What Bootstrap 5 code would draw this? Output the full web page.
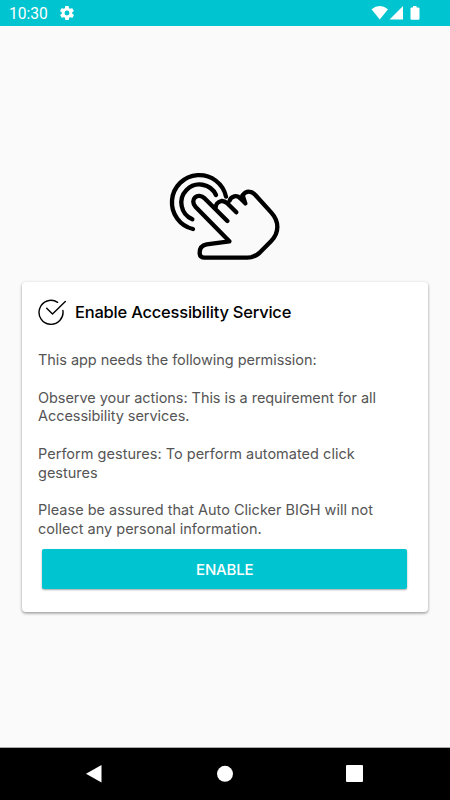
<!DOCTYPE html>
<html lang="en">
<head>
<meta charset="utf-8">
<meta name="viewport" content="width=device-width, initial-scale=1">
<title>Enable Accessibility Service</title>
<link href="https://cdn.jsdelivr.net/npm/bootstrap@5.3.0/dist/css/bootstrap.min.css" rel="stylesheet">
<style>
body{background:#fafafa;font-family:"Inter","Liberation Sans",sans-serif;height:800px;overflow:hidden}
svg{display:block;flex:none}
.status{height:26px;background:#00c5d0;padding:0 29px 0 9px;color:#fff}
.clock{font:15.6px/26px Roboto,sans-serif;width:51px;padding-top:1px}
.hero{margin:139px 0 0 160px}
.panel{margin:12px 22px 0;height:330px;border:0;border-radius:4px;box-shadow:0 1px 3px rgba(0,0,0,.32),0 2px 3px rgba(0,0,0,.12);padding:16px 16px 0}
.panel h1{font-size:16.5px;line-height:28px;font-weight:500;color:#000;letter-spacing:-.22px;margin-left:9px}
.copy{font-size:14.5px;line-height:18.75px;color:#555;margin-top:25px;white-space:nowrap}
.copy p{margin-bottom:18.75px}
.copy p:last-child{margin-bottom:0}
.l1,.l2,.l3{letter-spacing:-.05px}
.l4{letter-spacing:.02px}
.enable{margin:10.5px 5px 0 4.400px;height:40.400px;background:#00c5d0;color:#fff;border:0;border-radius:2px;font-size:15px;font-weight:500;letter-spacing:-.2px;padding:2px 0 0;box-shadow:0 1px 2px rgba(0,0,0,.35)}
.softkeys{height:52px;background:#000;box-shadow:0 -1px 0 #aaa}
</style>
<script src="https://cdn.jsdelivr.net/npm/bootstrap@5.3.0/dist/js/bootstrap.bundle.min.js"></script>
</head>
<body class="d-flex flex-column">
<header class="status d-flex align-items-center flex-shrink-0">
  <span class="clock">10:30</span>
  <svg width="14" height="14" viewBox="2 2 20 20" fill="#fff" aria-hidden="true"><path d="M19.4 13c.1-.3.1-.7.1-1s0-.7-.1-1l2.1-1.600c.2-.2.300-.4.100-.7l-2-3.400c-.1-.2-.4-.3-.6-.2l-2.500 1c-.5-.4-1.100-.7-1.700-1l-.4-2.600c0-.3-.2-.5-.5-.5h-4c-.2 0-.4.200-.5.500l-.4 2.600c-.6.300-1.200.600-1.700 1l-2.500-1c-.2-.1-.5 0-.6.200l-2 3.400c-.1.200-.1.500.1.700L4.600 11c0 .3-.1.700-.1 1s0 .7.100 1l-2.100 1.600c-.2.200-.3.400-.1.700l2 3.400c.1.200.4.300.6.200l2.500-1c.5.400 1.100.7 1.700 1l.4 2.600c0 .3.200.5.500.5h4c.2 0 .4-.2.500-.5l.4-2.600c.6-.3 1.200-.6 1.700-1l2.500 1c.2.100.5 0 .6-.2l2-3.400c.1-.2.100-.5-.1-.7zM12 15.500a3.500 3.500 0 1 1 0-7 3.500 3.500 0 0 1 0 7z"/></svg>
  <svg class="ms-auto" width="50" height="26" viewBox="371 0 50 26" fill="#fff" aria-hidden="true"><path d="M371.500 9.200Q379.800 2.600 388 9.200L379.800 19.500ZM403 6V19.500H389.500ZM413 7.500V6h3.500v1.500h1.800q1.200 0 1.200 1.200v9.900q0 1.200-1.200 1.200h-6.600q-1.200 0-1.200-1.200V8.700q0-1.200 1.200-1.200z"/></svg>
</header>
<main class="flex-grow-1">
  <svg class="hero" width="130" height="105" viewBox="0 0 390 315" fill="none" stroke="#000" stroke-width="13" stroke-linecap="round" stroke-linejoin="round" aria-hidden="true">
    <path d="M198 95A82 82 0 1 0 99 192M168 90A54.500 54.500 0 1 0 97 163"/>
    <path d="M202 168L135 101C113 80 87 104 107 126L208 229L140 238Q119 242 119 263Q119 278 134 278H262Q282 278 298 264L333 229Q352 209 352 186Q352 163 334 143L286 90Q278 80 266 80Q255 80 248 91"/>
    <path d="M229 142L201 114Q193 107 184 108Q168 112 167 127M256 115L240 99Q232 92 223 94Q211 97 209 107M248 91L256 115"/>
  </svg>
  <section class="panel card">
    <div class="d-flex align-items-center">
      <svg width="28" height="28" viewBox="38 298 28 28" fill="none" stroke="#000" stroke-width="1.400" stroke-linecap="round" stroke-linejoin="round" aria-hidden="true"><path d="M57.600 302.300A12 12 0 1 0 62.900 310.500M46.700 308.200L52.500 313.900L65.300 301.500"/></svg>
      <h1 class="mb-0"><span>Enable Accessibility Service</span></h1>
    </div>
    <div class="copy">
      <p><span class="l1">This app needs the following permission:</span></p>
      <p><span class="l2">Observe your actions: This is a requirement for all</span><br><span class="l3">Accessibility services.</span></p>
      <p><span class="l4">Perform gestures: To perform automated click</span><br><span>gestures</span></p>
      <p><span>Please be assured that Auto Clicker BIGH will not</span><br><span>collect any personal information.</span></p>
    </div>
    <button class="enable btn" type="button">ENABLE</button>
  </section>
</main>
<nav class="softkeys flex-shrink-0" aria-label="System navigation">
  <svg width="450" height="52" viewBox="0 748 450 52" fill="#fff" aria-hidden="true"><path d="M86 773.700L101.500 765V782.500Z"/><circle cx="225" cy="773.800" r="8"/><rect x="346" y="765" width="17" height="17" rx="1"/></svg>
</nav>
</body>
</html>
